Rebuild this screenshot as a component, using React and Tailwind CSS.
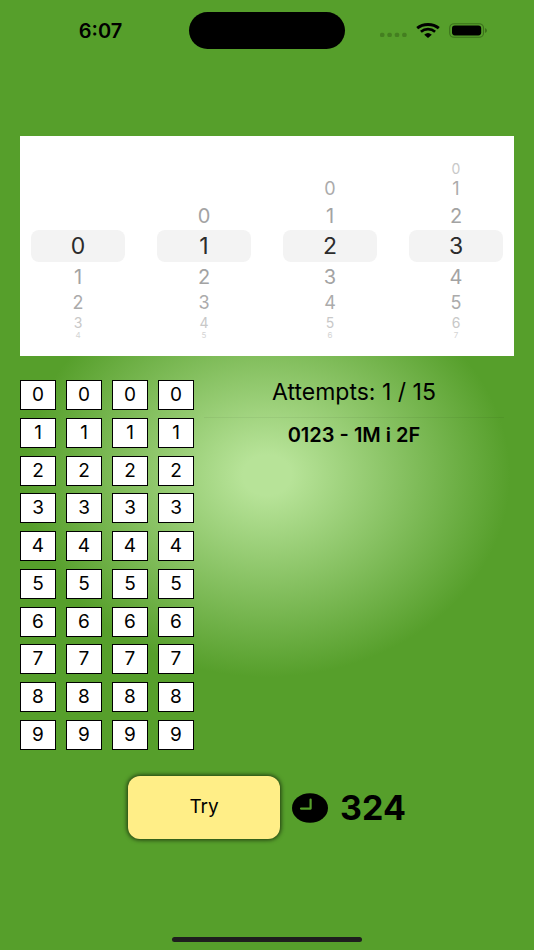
import React, { useState } from "react";

const DIGITS = [0, 1, 2, 3, 4, 5, 6, 7, 8, 9];

// Wheel rows fade and shrink with their distance from the selected one
const ROW_STYLES = [
  "h-8 rounded-lg bg-[#f3f3f3] text-[23px] leading-8 text-[#2b2b2b]",
  "h-[29px] text-xl leading-[30px] text-[#a3a3a3]",
  "h-6 text-lg leading-6 text-[#ababab]",
  "h-4 text-sm leading-4 text-[#c8c8c8]",
  "h-2 text-[8px] leading-[8px] text-[#d4d4d4]",
];

const OFFSETS = [-4, -3, -2, -1, 0, 1, 2, 3, 4];

const StatusBar = ({ time }) => (
  <header className="grid grid-cols-[1fr_156px_1fr] items-center px-3 pt-3">
    <time className="text-center text-xl leading-6 font-semibold">{time}</time>

    <div className="h-[37px] rounded-full bg-black" />

    <div className="flex items-center justify-center gap-[9px]">
      <svg width="27" height="15" viewBox="0 0 27 15" fill="#447f20">
        <rect x="0" y="9.7" width="4.4" height="4.2" rx="1.5" />
        <rect x="7.4" y="9.7" width="4.4" height="4.2" rx="1.5" />
        <rect x="14.8" y="9.7" width="4.4" height="4.2" rx="1.5" />
        <rect x="22.2" y="9.7" width="4.4" height="4.2" rx="1.5" />
      </svg>
      <svg width="24" height="15" viewBox="0 0 24 15" fill="none" stroke="#000">
        <path d="M1.2 5.2 C7.2 0.2 16.8 0.2 22.8 5.2" strokeWidth="2.9" />
        <path d="M4.9 8.7 C9 5.2 15 5.2 19.1 8.7" strokeWidth="2.7" />
        <path d="M8.2 11.7 Q12 8.4 15.8 11.7 L12 14.9 Z" fill="#000" stroke="none" />
      </svg>
      <svg width="39" height="15" viewBox="0 0 39 15">
        <rect x="0.7" y="0.7" width="33.8" height="13.6" rx="4.4" fill="none" stroke="#3b711b" strokeWidth="1.1" />
        <rect x="3" y="2.6" width="29.2" height="9.8" rx="2.8" fill="#000" />
        <path d="M36 5.2 C38.6 5.8 38.6 9.2 36 9.8 Z" fill="#3b711b" />
      </svg>
    </div>
  </header>
);

const Wheel = ({ value, onChange, label }) => (
  <div role="group" aria-label={label} className="flex min-w-0 flex-1 flex-col">
    {OFFSETS.map((offset) => {
      const digit = value + offset;
      const rowStyle = ROW_STYLES[Math.abs(offset)];

      if (digit < 0 || digit > 9) {
        return <div key={offset} className={rowStyle} />;
      }

      return (
        <button
          key={offset}
          type="button"
          onClick={() => onChange(digit)}
          className={`block w-full text-center ${rowStyle}`}
        >
          {digit}
        </button>
      );
    })}
  </div>
);

const NoteGrid = () => {
  const [crossed, setCrossed] = useState({});

  const toggle = (key) => setCrossed({ ...crossed, [key]: !crossed[key] });

  return (
    <div className="grid h-[370px] shrink-0 grid-cols-[repeat(4,36px)] content-between gap-x-[10px]">
      {DIGITS.map((digit) =>
        [0, 1, 2, 3].map((col) => {
          const key = `${digit}-${col}`;
          return (
            <button
              key={key}
              type="button"
              onClick={() => toggle(key)}
              className={`h-[30px] border border-black text-[19px] leading-7 ${
                crossed[key] ? "bg-gray-400" : "bg-white"
              }`}
            >
              {digit}
            </button>
          );
        })
      )}
    </div>
  );
};

const ClockIcon = () => (
  <svg width="36" height="30" viewBox="0 0 36 30" className="shrink-0">
    <ellipse cx="18" cy="15" rx="18" ry="14.8" fill="#000" />
    <path d="M18.6 6.6 V15.6 H9" fill="none" stroke="#569f2b" strokeWidth="2.2" strokeLinecap="round" strokeLinejoin="round" />
  </svg>
);

const App = () => {
  const [guess, setGuess] = useState([0, 1, 2, 3]);
  const [attempts, setAttempts] = useState(["0123 - 1M i 2F"]);

  const setDigit = (index, digit) =>
    setGuess(guess.map((d, i) => (i === index ? digit : d)));

  return (
    <div className="flex min-h-screen flex-col bg-[#569f2b] bg-[radial-gradient(243px_202px_at_50%_50%,#b7e398_10%,#569f2b_100%)] font-['Inter','Liberation_Sans',sans-serif] text-black">
      <StatusBar time="6:07" />

      <main className="flex flex-1 flex-col px-5 pt-[87px]">

        {/* Digit picker */}
        <section className="flex gap-8 bg-white px-[11px] py-[17px]">
          {guess.map((digit, i) => (
            <Wheel
              key={i}
              value={digit}
              label={`Digit ${i + 1}`}
              onChange={(d) => setDigit(i, d)}
            />
          ))}
        </section>

        {/* Notes and history */}
        <section className="flex gap-[10px] pt-6">
          <NoteGrid />

          <div className="min-w-0 flex-1 pr-[10px] text-center">
            <h1 className="border-b border-black/5 pb-3 text-[23px] leading-[25px]">
              Attempts: {attempts.length} / 15
            </h1>
            <ul className="pt-1 text-xl leading-[26px] font-semibold">
              {attempts.map((attempt, i) => (
                <li key={i}>{attempt}</li>
              ))}
            </ul>
          </div>
        </section>

        {/* Actions */}
        <section className="flex items-center justify-center gap-3 pt-[26px]">
          <button
            type="button"
            onClick={() => setAttempts([...attempts, guess.join("")])}
            className="h-[63px] w-[152px] rounded-xl bg-[#ffee87] text-[19px] shadow-[0_0_4px_1px_rgba(0,0,0,0.65)]"
          >
            Try
          </button>
          <ClockIcon />
          <span className="text-[34px] leading-9 font-bold">324</span>
        </section>
      </main>

      {/* Home indicator */}
      <footer className="flex justify-center pb-2">
        <div className="h-[5px] w-[190px] rounded-full bg-[#1e1e1e]" />
      </footer>
    </div>
  );
};

export default App;
